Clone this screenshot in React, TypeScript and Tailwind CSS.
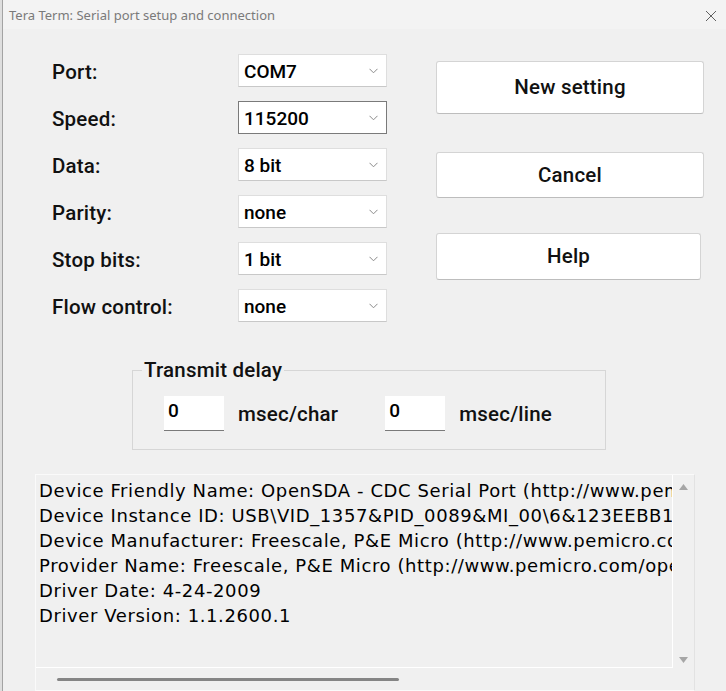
import React from "react";

const UI = '"Roboto", "Liberation Sans", Arial, sans-serif';

const Chevron = () => (
  <svg width="9" height="6" viewBox="0 0 9 6" className="shrink-0">
    <polyline points="0.5,0.8 4.5,4.8 8.5,0.8" fill="none" stroke="#8a8a8a" strokeWidth="1" />
  </svg>
);

function Combo({ value, focused }: { value: string; focused?: boolean }) {
  return (
    <div
      className={
        focused
          ? "flex h-[33px] w-[149px] items-center justify-between border border-[#7a7a7a] bg-white pl-[5px] pr-[8px]"
          : "flex h-[33px] w-[149px] items-center justify-between border border-[#dedede] border-b-[#c8c8c8] bg-white pl-[5px] pr-[8px]"
      }
    >
      <span className="pt-[1px] text-[19px] font-medium leading-none text-black">{value}</span>
      <Chevron />
    </div>
  );
}

function Row({ label, value, focused }: { label: string; value: string; focused?: boolean }) {
  return (
    <div className="mb-[14px] flex h-[33px] items-center">
      <div className="w-[186px] pt-[3px] text-[20.5px] font-medium tracking-[0.2px] text-[#111]">{label}</div>
      <Combo value={value} focused={focused} />
    </div>
  );
}

function Btn({ label, h, w, mt }: { label: string; h: string; w: string; mt: string }) {
  return (
    <div
      className={`${h} ${w} ${mt} flex items-center justify-center rounded-[3px] border border-[#d4d4d4] border-b-[#bdbdbd] bg-white text-[20.5px] font-medium tracking-[0.2px] text-[#111]`}
    >
      {label}
    </div>
  );
}

export default function App() {
  const lines = [
    "Device Friendly Name: OpenSDA - CDC Serial Port (http://www.pemicro.com/opensda)",
    "Device Instance ID: USB\\VID_1357&PID_0089&MI_00\\6&123EEBB1&0&0000",
    "Device Manufacturer: Freescale, P&E Micro (http://www.pemicro.com/opensda)",
    "Provider Name: Freescale, P&E Micro (http://www.pemicro.com/opensda)",
    "Driver Date: 4-24-2009",
    "Driver Version: 1.1.2600.1",
  ];
  return (
    <div
      className="flex h-[691px] w-[726px] overflow-hidden bg-[#f0f0f0]"
      style={{ fontFamily: UI }}
    >
      <div className="w-[2px] shrink-0 bg-[#dedede]" />
      <div className="flex w-[724px] flex-col border-l border-[#a3a3a3]">
        {/* title bar */}
        <div className="flex h-[32px] items-center justify-between bg-[#f3f3f3] pl-[6px] pr-[8px] pt-[2px]">
          <span
            className="text-[13px] text-[#7a7a7a]"
            style={{ fontFamily: '"Noto Sans", "Open Sans", sans-serif' }}
          >
            Tera Term: Serial port setup and connection
          </span>
          <svg width="12" height="12" viewBox="0 0 12 12" className="mr-[1px]">
            <path d="M1 1 L11 11 M11 1 L1 11" stroke="#606060" strokeWidth="1" fill="none" />
          </svg>
        </div>

        {/* top section */}
        <div className="flex pt-[25px]">
          <div className="ml-[49px] flex flex-col">
            <Row label="Port:" value="COM7" />
            <Row label="Speed:" value="115200" focused />
            <Row label="Data:" value="8 bit" />
            <Row label="Parity:" value="none" />
            <Row label="Stop bits:" value="1 bit" />
            <Row label="Flow control:" value="none" />
          </div>
          <div className="ml-[49px] flex flex-col">
            <Btn label="New setting" h="h-[53px]" w="w-[268px]" mt="mt-[7px]" />
            <Btn label="Cancel" h="h-[46px]" w="w-[268px]" mt="mt-[38px]" />
            <Btn label="Help" h="h-[47px]" w="w-[265px]" mt="mt-[35px]" />
          </div>
        </div>

        {/* transmit delay group */}
        <div className="relative ml-[129px] mt-[34px] h-[85px] w-[474px] border border-[#d6d6d6] pl-[31px] pt-[25px]">
          <div className="absolute left-[9px] top-[-14px] bg-[#f0f0f0] px-[2px] text-[20.5px] font-medium leading-[26px] tracking-[0.2px] text-[#111]">
            Transmit delay
          </div>
          <div className="flex items-center">
            <div className="h-[35px] w-[60px] border-b border-[#7a7a7a] bg-white pl-[4px] pt-[4px] text-[19px] font-medium leading-[22px] text-black">
              0
            </div>
            <div className="ml-[14px] pt-[2px] text-[20.5px] font-medium tracking-[0.2px] text-[#111]">msec/char</div>
            <div className="ml-[47px] h-[35px] w-[60px] border-b border-[#7a7a7a] bg-white pl-[4px] pt-[4px] text-[19px] font-medium leading-[22px] text-black">
              0
            </div>
            <div className="ml-[14px] pt-[2px] text-[20.5px] font-medium tracking-[0.2px] text-[#111]">msec/line</div>
          </div>
        </div>

        {/* info box */}
        <div className="ml-[32px] mt-[24px] flex h-[240px] w-[660px] flex-col border border-[#fafafa] border-r-[#e2e2e2]">
          <div className="flex h-[193px]">
            <div
              className="h-[193px] w-[637px] overflow-hidden whitespace-nowrap border-b border-r border-white pl-[3px] pt-[3px] text-[18px] leading-[25px] tracking-[0.6px] text-black"
              style={{ fontFamily: '"DejaVu Sans", sans-serif' }}
            >
              {lines.map((l) => (
                <div key={l}>{l}</div>
              ))}
            </div>
            <div className="flex w-[21px] flex-col items-center justify-between pb-[5px] pt-[9px]">
              <svg width="9" height="6" viewBox="0 0 9 6">
                <polygon points="0,6 4.5,0 9,6" fill="#a6a6a6" />
              </svg>
              <svg width="9" height="6" viewBox="0 0 9 6">
                <polygon points="0,0 4.5,6 9,0" fill="#a6a6a6" />
              </svg>
            </div>
          </div>
          <div className="pl-[21px] pt-[10px]">
            <div className="h-[3px] w-[342px] rounded-full bg-[#858585]" />
          </div>
        </div>
      </div>
    </div>
  );
}
